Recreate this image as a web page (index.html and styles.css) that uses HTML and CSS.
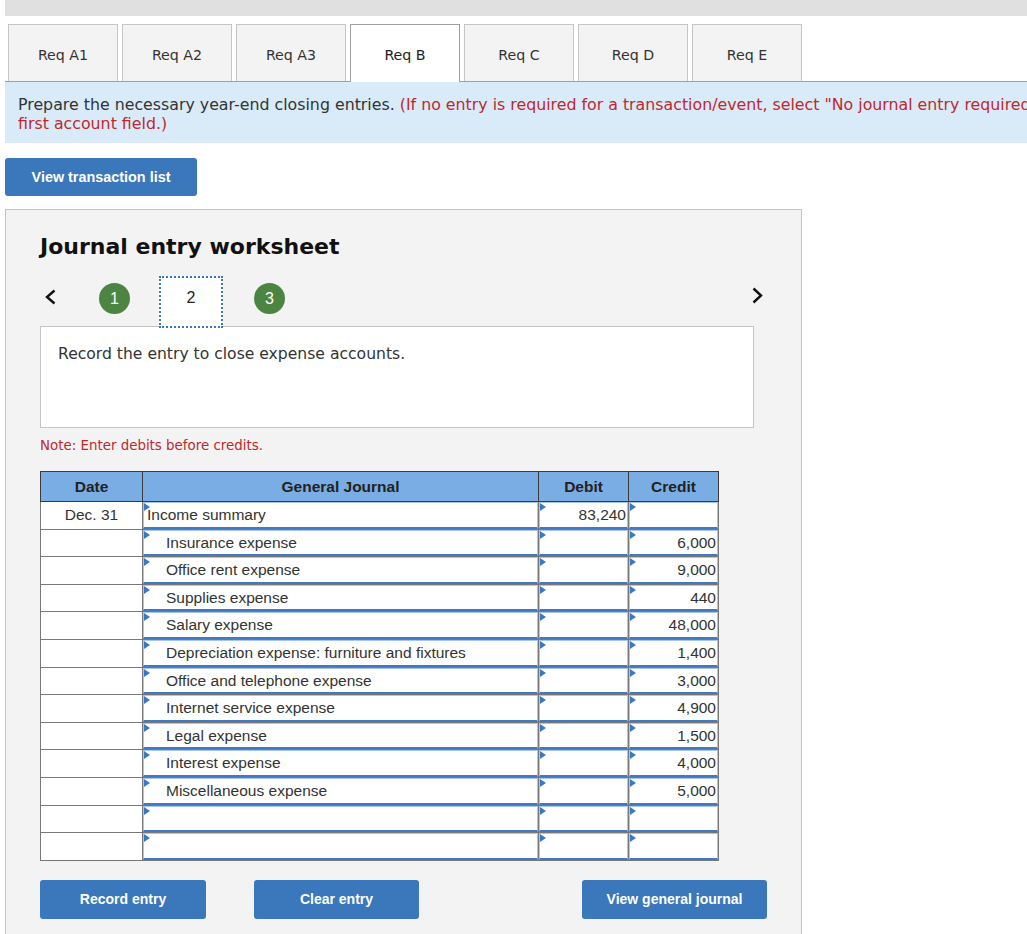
FILE: index.html
```html
<!DOCTYPE html>
<html>
<head>
<meta charset="utf-8">
<link rel="stylesheet" href="styles.css">
</head>
<body>
<div class="page">
  <div class="topbar"></div>
  <div class="tabs">
    <div class="tab">Req A1</div>
    <div class="tab">Req A2</div>
    <div class="tab">Req A3</div>
    <div class="tab active">Req B</div>
    <div class="tab">Req C</div>
    <div class="tab">Req D</div>
    <div class="tab">Req E</div>
  </div>
  <div class="instr">Prepare the necessary year-end closing entries. <span class="red">(If no entry is required for a transaction/event, select "No journal entry required" in the<br>first account field.)</span></div>
  <button class="btn btn-list">View transaction list</button>
  <div class="panel">
    <h2 class="title">Journal entry worksheet</h2>
    <div class="nav">
      <svg class="chev prev" width="11" height="16" viewBox="0 0 11 16"><polyline points="9.5,1.5 2,8 9.5,14.5" fill="none" stroke="#111" stroke-width="2.4"/></svg>
      <span class="step done s1">1</span>
      <span class="step current">2</span>
      <span class="step done s3">3</span>
      <svg class="chev next" width="11" height="17" viewBox="0 0 11 17"><polyline points="1.5,1.5 9,8.5 1.5,15.5" fill="none" stroke="#111" stroke-width="2.4"/></svg>
    </div>
    <div class="desc">Record the entry to close expense accounts.</div>
    <div class="note">Note: Enter debits before credits.</div>
    <table class="journal">
      <thead>
        <tr><th class="c-date">Date</th><th class="c-acct">General Journal</th><th class="c-num">Debit</th><th class="c-num">Credit</th></tr>
      </thead>
      <tbody>
        <tr><td class="date">Dec. 31</td><td><div class="inp acct">Income summary</div></td><td><div class="inp num">83,240</div></td><td><div class="inp num"></div></td></tr>
        <tr><td class="date"></td><td><div class="inp acct ind">Insurance expense</div></td><td><div class="inp num"></div></td><td><div class="inp num">6,000</div></td></tr>
        <tr><td class="date"></td><td><div class="inp acct ind">Office rent expense</div></td><td><div class="inp num"></div></td><td><div class="inp num">9,000</div></td></tr>
        <tr><td class="date"></td><td><div class="inp acct ind">Supplies expense</div></td><td><div class="inp num"></div></td><td><div class="inp num">440</div></td></tr>
        <tr><td class="date"></td><td><div class="inp acct ind">Salary expense</div></td><td><div class="inp num"></div></td><td><div class="inp num">48,000</div></td></tr>
        <tr><td class="date"></td><td><div class="inp acct ind">Depreciation expense: furniture and fixtures</div></td><td><div class="inp num"></div></td><td><div class="inp num">1,400</div></td></tr>
        <tr><td class="date"></td><td><div class="inp acct ind">Office and telephone expense</div></td><td><div class="inp num"></div></td><td><div class="inp num">3,000</div></td></tr>
        <tr><td class="date"></td><td><div class="inp acct ind">Internet service expense</div></td><td><div class="inp num"></div></td><td><div class="inp num">4,900</div></td></tr>
        <tr><td class="date"></td><td><div class="inp acct ind">Legal expense</div></td><td><div class="inp num"></div></td><td><div class="inp num">1,500</div></td></tr>
        <tr><td class="date"></td><td><div class="inp acct ind">Interest expense</div></td><td><div class="inp num"></div></td><td><div class="inp num">4,000</div></td></tr>
        <tr><td class="date"></td><td><div class="inp acct ind">Miscellaneous expense</div></td><td><div class="inp num"></div></td><td><div class="inp num">5,000</div></td></tr>
        <tr><td class="date"></td><td><div class="inp acct"></div></td><td><div class="inp num"></div></td><td><div class="inp num"></div></td></tr>
        <tr><td class="date"></td><td><div class="inp acct"></div></td><td><div class="inp num"></div></td><td><div class="inp num"></div></td></tr>
      </tbody>
    </table>
    <div class="actions">
      <button class="btn btn-record">Record entry</button>
      <button class="btn btn-clear">Clear entry</button>
      <button class="btn btn-view">View general journal</button>
    </div>
  </div>
</div>
</body>
</html>
```

FILE: styles.css
```css
html, body {
  margin: 0;
  padding: 0;
  overflow: hidden;
  background: #fff;
}
body {
  font-family: "DejaVu Sans", Verdana, sans-serif;
  color: #333;
}
.page {
  padding-left: 5px;
  width: 1100px;
}
.topbar {
  height: 16px;
  background: #e0e0e0;
}
.tabs {
  display: flex;
  gap: 4px;
  margin-top: 8px;
  padding-left: 3px;
  border-bottom: 1px solid #a0a0a0;
  height: 57px;
}
.tab {
  box-sizing: border-box;
  width: 110px;
  height: 57px;
  padding-top: 3px;
  background: #f3f3f3;
  border: 1px solid #c6c6c6;
  border-bottom: none;
  display: flex;
  align-items: center;
  justify-content: center;
  font-size: 14.2px;
  color: #333;
}
.tab.active {
  background: #fff;
  border-color: #a0a0a0;
  height: 58px;
  padding-top: 2px;
  color: #222;
}
.instr {
  background: #d9ebf9;
  font-size: 15.8px;
  line-height: 19px;
  padding: 13px 0 10px 13px;
  color: #333;
  white-space: nowrap;
}
.red {
  color: #c1272d;
}
.btn {
  display: block;
  border: none;
  border-radius: 3px;
  background: #3a77bb;
  color: #fff;
  font-family: "Liberation Sans", Arial, sans-serif;
  font-weight: bold;
  font-size: 14px;
  height: 39px;
  padding: 0;
  cursor: pointer;
}
.btn-list {
  margin-top: 15px;
  width: 192px;
  height: 38px;
  font-size: 14.4px;
}
.panel {
  box-sizing: border-box;
  margin-top: 13px;
  width: 797px;
  height: 740px;
  background: #f3f3f3;
  border: 1px solid #c4c4c4;
  padding: 24px 47px 0 34px;
}
.title {
  margin: 0;
  font-size: 22px;
  line-height: 26px;
  font-weight: bold;
  color: #111;
}
.nav {
  display: flex;
  align-items: flex-start;
  margin-top: 16px;
  margin-right: -9px;
  height: 52px;
  padding-left: 5px;
}
.chev.prev {
  margin-top: 13px;
}
.chev.next {
  margin-top: 11px;
  margin-left: auto;
}
.step {
  box-sizing: border-box;
  display: flex;
  align-items: center;
  justify-content: center;
  font-family: "Liberation Sans", Arial, sans-serif;
  font-size: 16px;
}
.step.done {
  width: 31px;
  height: 31px;
  border-radius: 50%;
  background: #4b8541;
  color: #fff;
  margin-top: 7px;
}
.s1 {
  margin-left: 43px;
}
.step.current {
  width: 64px;
  height: 52px;
  margin-left: 29px;
  margin-right: 31px;
  background: #fff;
  border: 2px dotted #3a77bb;
  align-items: flex-start;
  padding-top: 11px;
  color: #222;
}
.desc {
  box-sizing: border-box;
  margin-top: -2px;
  height: 102px;
  background: #fff;
  border: 1px solid #c4c4c4;
  padding: 18px 17px;
  font-size: 15.6px;
  line-height: 19px;
  color: #333;
}
.note {
  margin-top: 10px;
  font-size: 13.4px;
  line-height: 16px;
  color: #c1272d;
}
.journal {
  margin-top: 17px;
  border-collapse: collapse;
  width: 678px;
  font-family: "Liberation Sans", Arial, sans-serif;
  font-size: 15.5px;
  color: #333;
  table-layout: fixed;
}
.journal th {
  height: 29px;
  padding: 0;
  background: #7aade3;
  border: 1px solid #3a3a3a;
  font-weight: bold;
  color: #222;
  font-size: 15.5px;
}
.c-date { width: 101px; }
.c-acct { width: 395px; }
.c-num { width: 89px; }
.journal td {
  padding: 0;
  border: 1px solid #787878;
  background: #fff;
  height: 26.6px;
}
.journal td.date {
  text-align: center;
}
.inp {
  position: relative;
  box-sizing: border-box;
  height: 26.6px;
  background: #fff;
  border: 1px solid #a9c5e8;
  border-bottom: 2px solid #4279c2;
  line-height: 24px;
  white-space: nowrap;
}
.inp::before {
  content: "";
  position: absolute;
  left: 0;
  top: 0;
  width: 0;
  height: 0;
  border-top: 4px solid transparent;
  border-bottom: 4px solid transparent;
  border-left: 6px solid #3b78c3;
}
.inp.acct {
  padding-left: 3px;
}
.inp.acct.ind {
  padding-left: 22px;
}
.inp.num {
  text-align: right;
  padding-right: 1px;
}
.actions {
  display: flex;
  margin-top: 19px;
}
.btn-record {
  width: 166px;
}
.btn-clear {
  width: 165px;
  margin-left: 48px;
}
.btn-view {
  width: 185px;
  margin-left: auto;
  margin-right: 0;
  position: relative;
  left: 13px;
}
```
